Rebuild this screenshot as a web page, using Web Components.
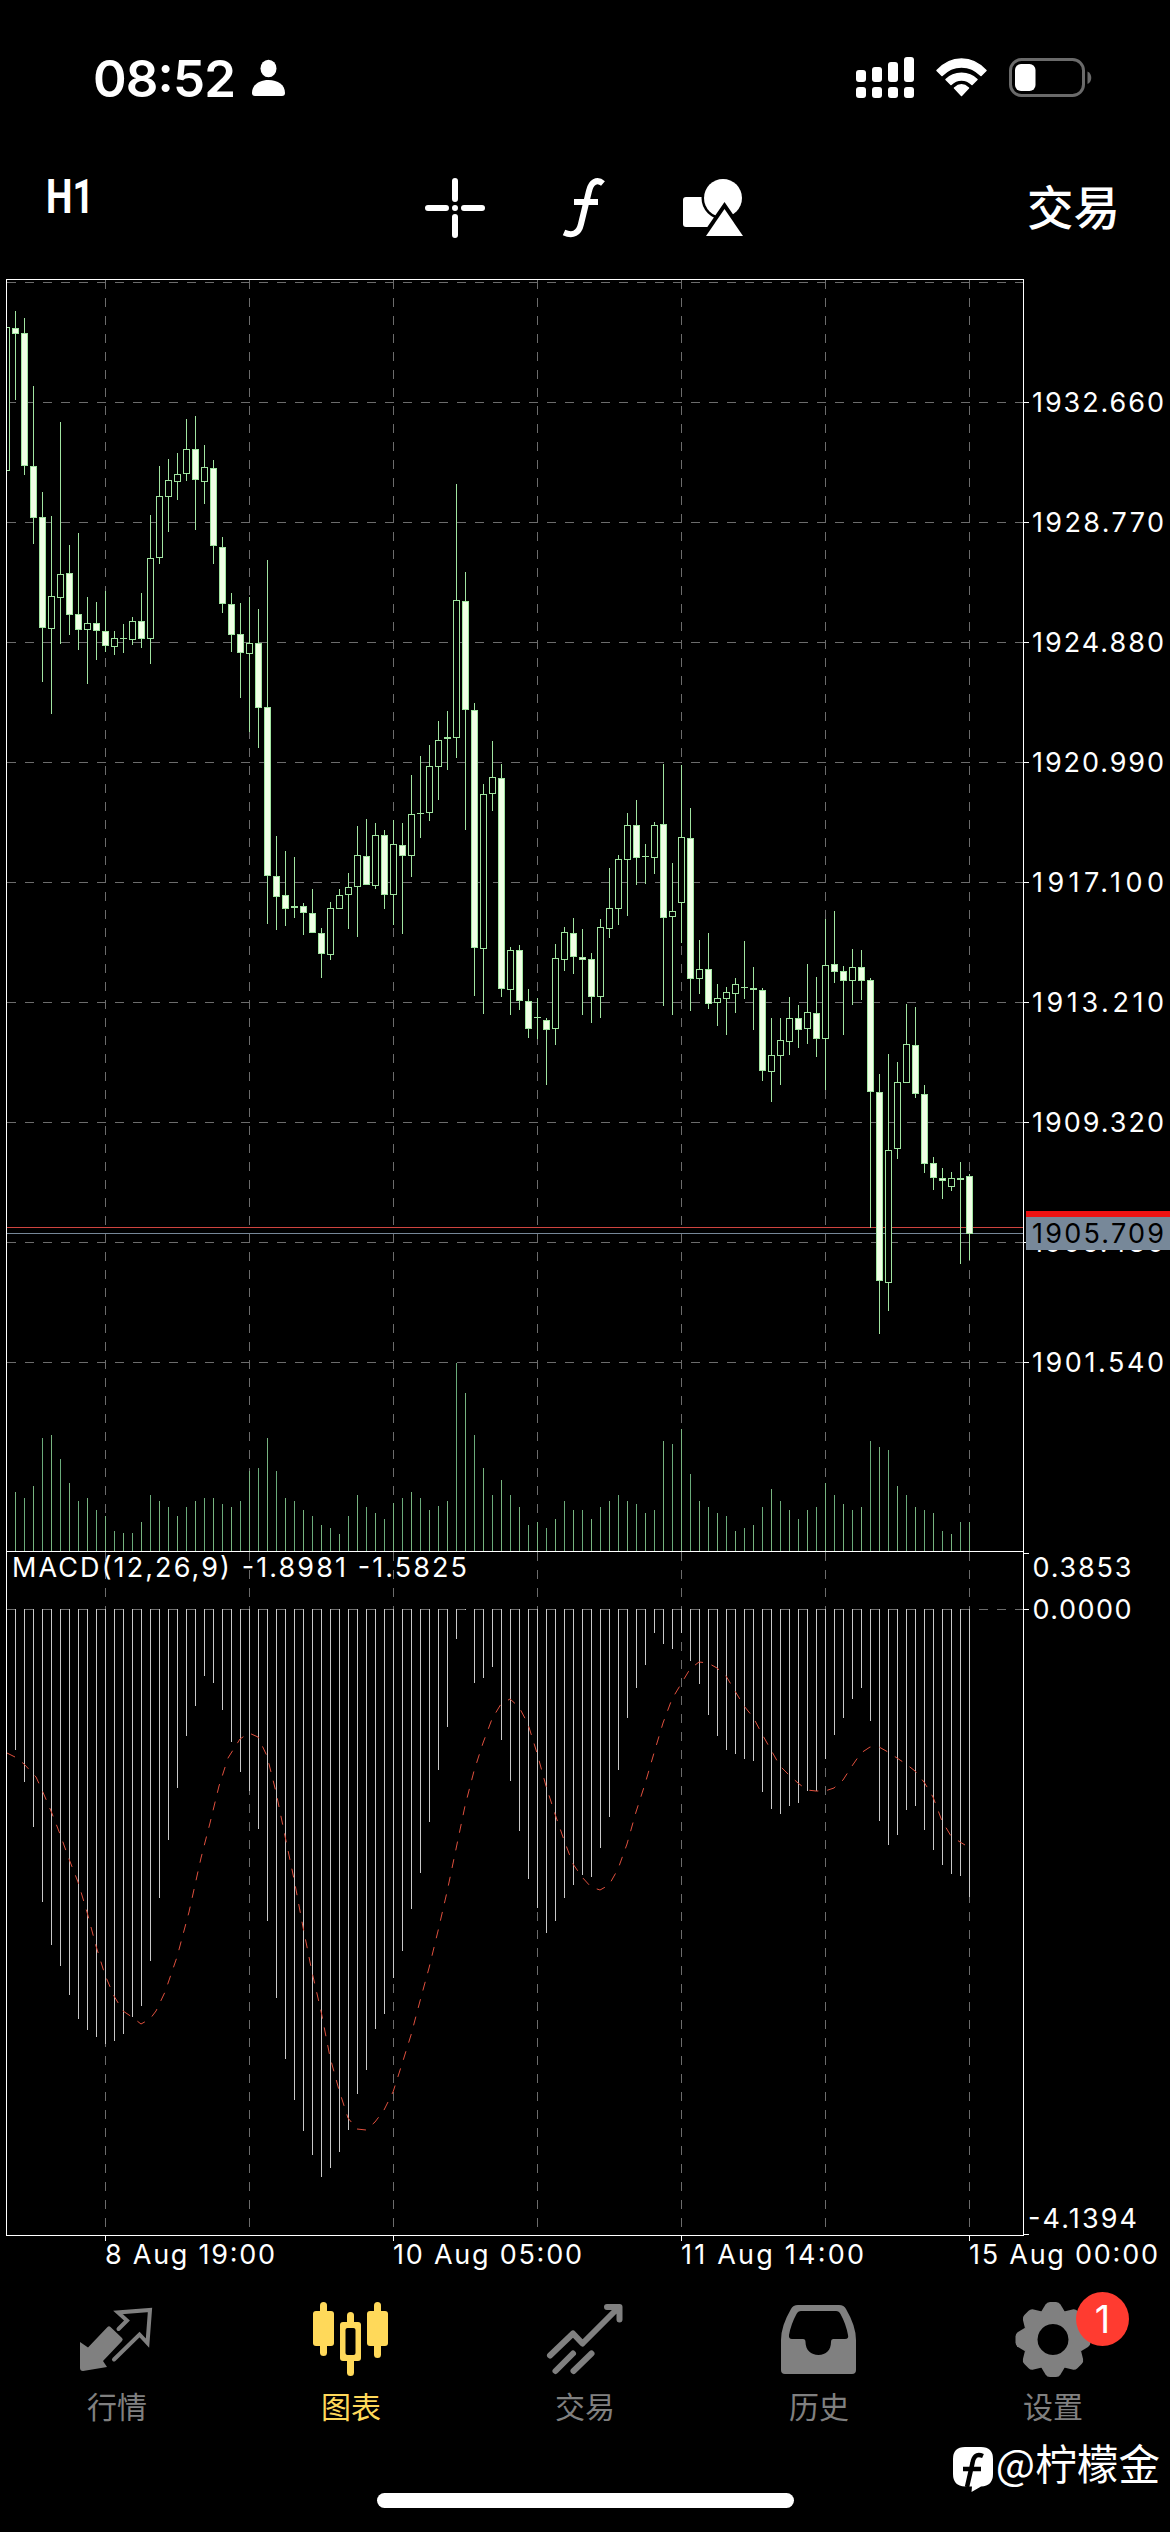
<!DOCTYPE html>
<html lang="zh-CN">
<head>
<meta charset="utf-8">
<title>Chart</title>
<style>
html,body{margin:0;background:#000}
body{width:1170px;height:2532px;overflow:hidden;color:#fff;font-family:Inter,"Noto Sans CJK SC",sans-serif}
</style>
</head>
<body>
<trading-app></trading-app>
<script>
const define = (name, html, setup) => {
  const t = document.createElement('template');
  t.innerHTML = html;
  customElements.define(name, class extends HTMLElement {
    constructor() {
      super();
      this.attachShadow({ mode: 'open' }).appendChild(t.content.cloneNode(true));
    }
    connectedCallback() { if (setup) setup(this, this.shadowRoot); }
  });
};

define('status-bar', `
<style>
:host{display:flex;height:135px;box-sizing:border-box;padding:46px 78px 0 93px;justify-content:space-between;align-items:flex-start}
.l,.r{display:flex;align-items:center;height:64px}
svg{display:block}
</style>
<div class="l">
  <svg width="200" height="64" viewBox="93 46 200 64" fill="#fff">
    <text x="93" y="96.5" font-family="Inter,sans-serif" font-weight="600" font-size="51" textLength="143">08:52</text>
    <ellipse cx="268.5" cy="68.5" rx="8" ry="8.8"/>
    <path d="M252 93c0-8 7-13 16.500-13s16.500 5 16.500 13c0 2-1 3-3 3h-27c-2 0-3-1-3-3z"/>
  </svg>
</div>
<div class="r">
  <svg width="240" height="64" viewBox="852 46 240 64" fill="#fff">
    <g>
      <rect x="856" y="70" width="10" height="12" rx="3"/><rect x="872" y="67" width="10" height="15" rx="3"/>
      <rect x="888" y="62" width="10" height="20" rx="3"/><rect x="904" y="57" width="10" height="25" rx="3"/>
      <rect x="856" y="87" width="10" height="11" rx="3"/><rect x="872" y="87" width="10" height="11" rx="3"/>
      <rect x="888" y="87" width="10" height="11" rx="3"/><rect x="904" y="87" width="10" height="11" rx="3"/>
    </g>
    <g>
      <path d="M937 70.500C951 55 972 55 986 70.500L981 75.500C970 64 953 64 942 75.500Z" stroke="#fff" stroke-width="1.500" stroke-linejoin="round"/>
      <path d="M946 79.500C954 71 969 71 977 79.500L972 84.500C966 78.500 957 78.500 951 84.500Z" stroke="#fff" stroke-width="1.500" stroke-linejoin="round"/>
      <path d="M954.500 88C959 84 964 84 968.500 88L961.500 95.500Z" stroke="#fff" stroke-width="1.500" stroke-linejoin="round"/>
    </g>
    <rect x="1010.500" y="59.500" width="73" height="36" rx="11" fill="none" stroke="#6a6a6a" stroke-width="3"/>
    <path d="M1087.500 71.500c5 2 5 10.500 0 12.500z" fill="#6a6a6a"/>
    <rect x="1015" y="64" width="20.500" height="27" rx="6"/>
  </svg>
</div>`);

define('chart-toolbar', `
<style>
:host{display:flex;height:135px;justify-content:space-between;align-items:flex-start;box-sizing:border-box;padding:35px 50px 0 46px}
.period{width:60px;height:60px;font:700 48px/54px Roboto,sans-serif;white-space:nowrap}
.period span{display:inline-block;transform:scaleX(.78);transform-origin:0 50%}
.tools{display:flex;padding-left:311px;flex:1}
.tools svg{margin-right:65px}
.tools svg + svg{margin-right:70px}
svg{display:block}
.trade{font:500 46.500px/66px "Noto Sans CJK SC",sans-serif;padding-top:2px}
</style>
<div class="period"><span>H1</span></div>
<div class="tools">
  <svg width="76" height="76" viewBox="417 169 76 76" stroke="#fff" stroke-width="6" stroke-linecap="round">
    <path d="M428 207H446M464 207H482M455 180V198M455 216V234M455 207V207"/>
  </svg>
  <svg width="52" height="76" viewBox="558 169 52 76" fill="none" stroke="#fff" stroke-width="6">
    <path d="M603 182.500C597 177.500 591 181 589 190L581 223C579 232 573 235.500 564 231.500"/>
    <path d="M574 201H598"/>
  </svg>
  <svg width="66" height="76" viewBox="680 169 66 76" fill="#fff">
    <rect x="683" y="196" width="37" height="30" rx="3"/>
    <circle cx="723" cy="197" r="19" stroke="#000" stroke-width="5" paint-order="stroke"/>
    <path d="M724.500 208L743 235H706Z" stroke="#000" stroke-width="8" paint-order="stroke"/>
  </svg>
</div>
<div class="trade">交易</div>`);

// Each bar: [high, body top, body bottom, low, filled]
const BARS = [
[327,327,470,470,0],[311,328,333,399,1],[318,333,465,474,1],[386,466,517,543,1],[492,517,627,681,1],[516,596,628,713,0],[422,574,597,643,0],[545,573,614,634,1],[533,614,629,649,1],[597,623,629,683,0],
[602,623,630,659,1],[591,631,645,651,1],[631,638,646,654,0],[624,638,638,652,1],[617,621,639,644,0],[593,621,638,647,1],[515,558,638,663,0],[466,496,557,563,0],[459,480,496,531,0],[453,474,481,499,0],
[419,449,473,480,0],[416,449,479,529,1],[445,467,481,503,0],[460,468,545,563,1],[537,547,603,612,1],[593,604,634,651,1],[603,634,652,697,1],[597,643,653,731,0],[609,643,707,747,1],[560,707,875,923,1],
[836,876,896,929,1],[851,895,908,925,1],[857,906,907,917,1],[903,906,912,934,1],[889,913,932,932,1],[928,933,953,977,1],[902,908,954,959,0],[889,895,908,908,0],[873,887,894,928,0],[826,855,886,936,0],
[819,856,884,884,1],[823,835,885,888,0],[830,835,894,908,1],[820,844,894,924,0],[823,845,855,933,1],[775,814,855,876,0],[756,813,813,837,1],[745,766,812,820,0],[721,740,766,799,0],[711,737,738,769,1],
[484,600,737,757,0],[572,601,709,829,1],[703,710,947,995,1],[784,794,948,1013,0],[741,777,793,810,0],[764,778,988,996,1],[947,950,989,1014,0],[945,950,1000,1009,1],[989,1001,1028,1037,1],[998,1017,1017,1038,1],
[1018,1020,1029,1084,1],[944,958,1028,1044,0],[927,932,959,970,0],[918,933,956,973,1],[929,957,959,1014,1],[953,959,996,1022,1],[919,927,996,1017,0],[868,908,928,937,0],[855,859,908,924,0],[813,825,859,915,0],
[800,825,857,884,1],[844,856,856,883,1],[822,825,857,873,0],[764,824,917,1005,1],[863,911,916,1014,0],[765,837,902,942,0],[808,838,978,1010,1],[940,969,978,993,0],[933,969,1003,1008,1],[984,998,1002,1025,0],
[987,992,998,1034,0],[978,984,993,1012,0],[941,987,987,998,1],[967,988,989,1029,1],[988,990,1070,1080,1],[1018,1055,1071,1101,0],[1018,1040,1055,1084,0],[997,1018,1041,1054,0],[1005,1018,1029,1047,1],[964,1012,1028,1043,0],
[977,1013,1038,1056,1],[919,965,1038,1089,0],[911,964,971,982,1],[966,971,980,1034,1],[949,967,980,1004,0],[950,967,980,999,1],[978,980,1091,1227,1],[1074,1092,1280,1333,1],[1054,1150,1282,1310,0],[1062,1082,1148,1158,0],
[1004,1044,1082,1082,0],[1007,1045,1093,1097,1],[1085,1094,1163,1172,1],[1157,1163,1177,1189,1],[1168,1178,1180,1198,1],[1172,1178,1186,1190,0],[1162,1178,1179,1263,1],[1174,1176,1233,1259,1]];

// Top edge of each volume bar
const VOL = [0,1492,1498,1486,1438,1435,1459,1483,1501,1498,1510,1516,1531,1533,1533,1522,1495,1501,1507,1516,1507,1501,1498,1498,1504,1507,1501,1471,1468,1438,1471,1498,1501,1510,1516,1525,1528,1534,1516,1495,1507,1513,1519,1503,1498,1492,1498,1510,1506,1501,1363,1393,1435,1468,1495,1480,1495,1507,1525,1522,1528,1519,1501,1510,1510,1519,1507,1501,1495,1501,1504,1513,1510,1441,1444,1429,1474,1501,1507,1513,1516,1531,1528,1525,1507,1489,1501,1510,1519,1510,1507,1483,1495,1504,1510,1507,1441,1447,1450,1486,1495,1507,1510,1513,1531,1534,1522,1522];

// Lower end of each MACD histogram bar
const MACD = [0,1750,1782,1827,1902,1945,1966,1995,2019,2030,2037,2044,2041,2034,2017,2006,1961,1898,1840,1788,1736,1706,1676,1683,1710,1742,1772,1791,1829,1921,1998,2059,2100,2131,2155,2177,2168,2152,2130,2094,2070,2029,2014,1978,1951,1909,1873,1822,1770,1727,1639,1610,1683,1678,1667,1740,1781,1831,1879,1908,1933,1921,1898,1885,1875,1877,1848,1817,1770,1718,1688,1665,1633,1644,1649,1633,1661,1684,1715,1736,1750,1754,1759,1761,1792,1809,1814,1806,1803,1791,1791,1759,1735,1718,1699,1688,1721,1821,1845,1835,1810,1806,1830,1850,1865,1874,1876,1897];

const SIGNAL = '7,1753 15,1757 24,1764 36,1777 42,1790 51,1811 60,1834 69,1859 78,1882 87,1912 96,1946 105,1975 114,1996 123,2011 132,2017 141,2024 150,2019 156,2011 165,1992 177,1957 189,1912 201,1858 210,1823 219,1786 228,1758 240,1739 249,1733 258,1737 267,1756 276,1792 285,1836 294,1879 303,1927 312,1972 321,2011 330,2057 339,2090 348,2118 357,2129 366,2130 375,2122 384,2110 393,2092 402,2064 411,2035 420,2001 429,1968 438,1931 447,1892 456,1849 465,1806 474,1771 483,1743 492,1719 501,1704 510,1699 519,1707 528,1724 537,1753 546,1786 555,1814 564,1840 573,1864 582,1877 591,1887 600,1890 609,1885 618,1869 627,1844 636,1812 645,1784 654,1753 663,1723 672,1699 681,1684 690,1669 699,1662 708,1663 717,1668 726,1676 735,1691 744,1706 753,1717 762,1734 771,1750 780,1766 789,1775 798,1783 807,1790 816,1791 825,1791 834,1788 843,1780 852,1766 861,1753 870,1747 879,1747 888,1752 897,1758 906,1764 915,1771 924,1782 933,1797 942,1821 951,1836 960,1842 965,1845';

define('price-chart', `
<style>
:host{display:block;height:2000px}
svg{display:block}
text{font-family:Inter,sans-serif;font-size:27px;fill:#fff}
</style>
<svg width="1170" height="2000" viewBox="0 270 1170 2000"></svg>`, (el, root) => {
  const R = (x, y, w, h, f) => `<rect x="${x}" y="${y}" width="${w}" height="${h}" fill="${f}"/>`;
  const T = (x, y, len, s, f = '#fff') => `<text x="${x}" y="${y}" textLength="${len}" style="fill:${f}">${s}</text>`;
  const grid = '#6c6c6c', green = '#a0e4a0';
  let g = '<g shape-rendering="crispEdges">';
  const hline = (y, x0 = 7) => `<path d="M${x0} ${y + .5}H1023" stroke="${grid}" stroke-dasharray="9 9"/>`;
  for (let y = 282; y <= 1362; y += 120) g += hline(y);
  g += hline(1609);
  for (let x = 105; x <= 969; x += 144)
    g += `<path d="M${x + .5} 280V1551M${x + .5} 1552V2235" stroke="${grid}" stroke-dasharray="9 9"/>`;
  VOL.forEach((v, i) => { if (v) g += R(6 + 9 * i, v, 1, 1551 - v, i % 2 ? '#78b480' : '#6aaa7a'); });
  MACD.forEach((v, i) => { if (v) g += R(6 + 9 * i, 1609, 1, v - 1609, '#c8c8c8'); });
  g += R(7, 1227, 1016, 1, '#d0443f') + R(7, 1233, 1016, 1, '#778899');
  BARS.forEach(([h, t, b, l, f], i) => {
    const x = 6 + 9 * i;
    if (i) g += R(x, h, 1, l - h + 1, green);
    const bx = i ? x - 3 : 6, bw = i ? 7 : 4;
    if (f && b - t < 2) g += R(bx, t, bw, b - t + 1, green);
    else g += R(bx, t, bw, b - t + 1, green) + R(bx + 1, t + 1, bw - 2, b - t - 1, f ? '#f0ffe6' : '#000');
  });
  g += R(6, 279, 1018, 1, '#fff') + R(6, 1551, 1018, 1, '#fff') + R(6, 2235, 1018, 1, '#fff')
     + R(6, 279, 1, 1957, '#fff') + R(1023, 279, 1, 1957, '#fff');
  for (let y = 402; y <= 1362; y += 120) g += R(1024, y, 5, 1, '#fff');
  [1553, 1609, 2234].forEach(y => g += R(1024, y, 5, 1, '#fff'));
  [105, 393, 681, 969].forEach(x => g += R(x, 2236, 1, 5, '#fff'));
  g += '</g>';
  g += `<polyline points="${SIGNAL}" fill="none" stroke="#e0503e" stroke-width="1" stroke-dasharray="9 9"/>`;
  ['1932.660','1928.770','1924.880','1920.990','1917.100','1913.210','1909.320','1905.430','1901.540']
    .forEach((s, i) => g += T(1032, 412 + 120 * i, 132, s));
  g += R(1026, 1211, 144, 39, '#778899') + R(1026, 1211, 144, 6, '#ee1111');
  g += T(1032, 1243, 132, '1905.709', '#000');
  g += T(12, 1577, 455, 'MACD(12,26,9) -1.8981 -1.5825');
  g += T(1032.5, 1577, 99, '0.3853') + T(1032.5, 1619, 99, '0.0000') + T(1028, 2228, 109, '-4.1394');
  g += T(105, 2264, 170, '8 Aug 19:00') + T(393, 2264, 189, '10 Aug 05:00') + T(681, 2264, 183, '11 Aug 14:00') + T(969, 2264, 189, '15 Aug 00:00');
  root.querySelector('svg').innerHTML = g;
});

define('tab-item', `
<style>
:host{display:flex;flex:1;flex-direction:column;align-items:center;color:#808080;position:relative}
:host([active]){color:#ffd95a}
.label{font:400 30px/44px "Noto Sans CJK SC",sans-serif;margin-top:-1px}
::slotted(svg){display:block}
</style>
<slot name="icon"></slot><div class="label"><slot></slot></div><slot name="badge"></slot>`);

define('count-badge', `
<style>
:host{position:absolute;left:140px;top:22px;width:53px;height:54px;border-radius:50%;background:#ff3b30;color:#fff;font:400 38px/54px Inter,sans-serif;text-align:center}
</style><slot></slot>`);

define('tab-bar', `
<style>:host{display:flex;height:223px}</style>
<tab-item><svg slot="icon" width="100" height="114" viewBox="67 2270 100 114" fill="none" stroke="currentColor">
  <path d="M80 2342L88 2347.500L107.500 2327Q109 2325.500 110.500 2327L122 2338Q123.500 2339.500 122 2341L103 2361L107 2367L83 2371Q80 2371 80 2368Z" fill="currentColor" stroke="none"/>
  <path d="M118.500 2329L127 2320.500L118 2312.500L150 2310L147.500 2343L139.500 2334.500L114 2359.500" stroke-width="4" stroke-linecap="round"/>
</svg>行情</tab-item>
<tab-item active><svg slot="icon" width="100" height="114" viewBox="301 2270 100 114" fill="currentColor">
  <rect x="313" y="2311" width="21" height="35" rx="3"/><rect x="320" y="2302" width="7" height="54" rx="3.500"/>
  <rect x="367" y="2311" width="21" height="35" rx="3"/><rect x="374" y="2302" width="7" height="56" rx="3.500"/>
  <rect x="340" y="2322" width="21" height="39" rx="3"/><rect x="347" y="2312" width="7" height="64" rx="3.500"/>
  <rect x="345.500" y="2328" width="10" height="27" rx="2" fill="#000"/>
</svg>图表</tab-item>
<tab-item><svg slot="icon" width="100" height="114" viewBox="535 2270 100 114" fill="none" stroke="currentColor" stroke-width="6" stroke-linecap="round" stroke-linejoin="round">
  <path d="M550 2355.500L573 2333.500L582.500 2343.500L618 2308M607 2307H619.500V2319.500M555.500 2371L573 2353.500M573.500 2371L591.500 2353.500"/>
</svg>交易</tab-item>
<tab-item><svg slot="icon" width="100" height="114" viewBox="769 2270 100 114" fill="currentColor">
  <path fill-rule="evenodd" d="M798 2305H839Q844 2305 846 2309Q856 2326 856 2340V2370Q856 2374 852 2374H785Q781 2374 781 2370V2340Q781 2326 791 2309Q793 2305 798 2305ZM801 2311Q798 2311 796.500 2314Q791 2324 789 2335Q788.500 2339 792 2339H803Q805.500 2339 805.500 2342C805.500 2350 811 2355 818.500 2355S831 2350 831 2342Q831 2339 833.500 2339H845Q849 2339 848 2335Q846 2324 840.500 2314Q839 2311 836 2311Z"/>
</svg>历史</tab-item>
<tab-item><svg slot="icon" width="100" height="114" viewBox="1002 2270 100 114" fill="currentColor">
  <g class="gear"></g>
</svg>设置<count-badge slot="badge">1</count-badge></tab-item>`, (el, root) => {
  const tooth = 'M1040 2312L1044.500 2304.500Q1046 2302 1049 2302H1055Q1058 2302 1059.500 2304.500L1064 2312Z';
  let s = '<path fill-rule="evenodd" d="M1052 2309.500a30 30 0 1 0 .01 0ZM1052 2324a15.500 15.500 0 1 1 -.01 0Z"/>';
  for (let a = 0; a < 360; a += 45) s += `<path d="${tooth}" transform="rotate(${a} 1052 2339.500)"/>`;
  root.querySelector('.gear').innerHTML = s;
});

define('home-indicator', `
<style>:host{display:block;width:417px;height:15px;border-radius:7.500px;background:#fff;margin:0 auto}</style>`);

define('author-mark', `
<style>
:host{position:absolute;right:10px;top:2433px;display:flex;align-items:flex-start;gap:2px;font:400 41.600px/58px "Noto Sans CJK SC",sans-serif;color:#fff}
svg{display:block;margin-top:3px}
</style>
<svg width="42" height="58" viewBox="948 2436 42 58">
  <path d="M961 2447H977Q989 2447 989 2459V2474Q989 2486 977 2486.500Q974 2488 967.500 2492L968 2486.500H961Q949 2486 949 2474V2459Q949 2447 961 2447Z" fill="#fff"/>
  <path d="M979 2456C972 2453 969.500 2457 968.500 2463L963 2487M959 2469H977" fill="none" stroke="#000" stroke-width="4.500"/>
</svg>
<span><slot></slot></span>`);

define('trading-app', `
<style>:host{display:flex;flex-direction:column;position:relative;width:1170px;height:2532px;background:#000;overflow:hidden}</style>
<status-bar></status-bar>
<chart-toolbar></chart-toolbar>
<price-chart></price-chart>
<tab-bar></tab-bar>
<home-indicator></home-indicator>
<author-mark>@柠檬金</author-mark>`);
</script>
</body>
</html>
